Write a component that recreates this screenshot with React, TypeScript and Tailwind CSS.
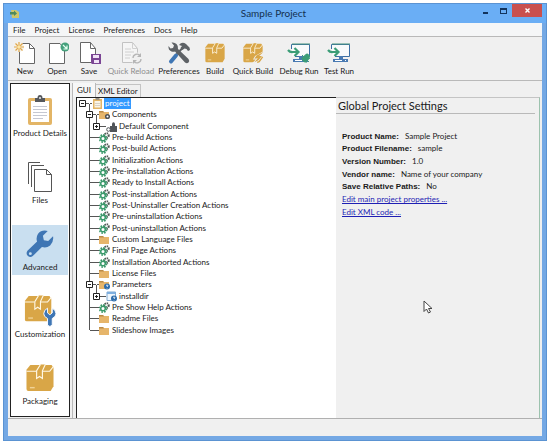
import { ReactNode, useState } from "react";

type TreeIcon =
  | "clipboard"
  | "components"
  | "component"
  | "gears"
  | "folder"
  | "params"
  | "param";

interface TreeNode {
  label: string;
  icon: TreeIcon;
  depth: number;
  toggle?: "plus" | "minus";
}

const treeNodes: TreeNode[] = [
  { label: "project", icon: "clipboard", depth: 0, toggle: "minus" },
  { label: "Components", icon: "components", depth: 1, toggle: "minus" },
  { label: "Default Component", icon: "component", depth: 2, toggle: "plus" },
  { label: "Pre-build Actions", icon: "gears", depth: 1 },
  { label: "Post-build Actions", icon: "gears", depth: 1 },
  { label: "Initialization Actions", icon: "gears", depth: 1 },
  { label: "Pre-installation Actions", icon: "gears", depth: 1 },
  { label: "Ready to Install Actions", icon: "gears", depth: 1 },
  { label: "Post-installation Actions", icon: "gears", depth: 1 },
  { label: "Post-Uninstaller Creation Actions", icon: "gears", depth: 1 },
  { label: "Pre-uninstallation Actions", icon: "gears", depth: 1 },
  { label: "Post-uninstallation Actions", icon: "gears", depth: 1 },
  { label: "Custom Language Files", icon: "folder", depth: 1 },
  { label: "Final Page Actions", icon: "gears", depth: 1 },
  { label: "Installation Aborted Actions", icon: "gears", depth: 1 },
  { label: "License Files", icon: "folder", depth: 1 },
  { label: "Parameters", icon: "params", depth: 1, toggle: "minus" },
  { label: "installdir", icon: "param", depth: 2, toggle: "plus" },
  { label: "Pre Show Help Actions", icon: "gears", depth: 1 },
  { label: "Readme Files", icon: "folder", depth: 1 },
  { label: "Slideshow Images", icon: "folder", depth: 1 },
];

const settings = [
  { name: "Product Name:", value: "Sample Project" },
  { name: "Product Filename:", value: "sample" },
  { name: "Version Number:", value: "1.0" },
  { name: "Vendor name:", value: "Name of your company" },
  { name: "Save Relative Paths:", value: "No" },
];

const menus = ["File", "Project", "License", "Preferences", "Docs", "Help"];

function Box() {
  return (
    <g>
      <path d="M5 1 H27 L29 4 V23 L26 28 H3 Q1 28 1 26 V6 Z" fill="#d9a647" />
      <path d="M1 7.500 H11 M18 7.500 H25 L29 2.500" stroke="#fff8e6" strokeWidth="1.200" fill="none" />
      <path d="M15.500 0.500 L11.500 7 V15 L14.500 13 L17.500 15 V7 L20.500 0.500" stroke="#fff8e6" strokeWidth="1.200" fill="#d9a647" />
      <path d="M4.500 24.500 H9.500" stroke="#f0d296" strokeWidth="1.500" />
    </g>
  );
}

function BoxIcon({ className }: { className: string }) {
  return (
    <svg viewBox="0 0 30 29" className={className} aria-hidden="true">
      <Box />
    </svg>
  );
}

function QuickBoxIcon() {
  return (
    <svg viewBox="0 0 30 29" className="h-5 w-[22px]" aria-hidden="true">
      <Box />
      <path d="M30 12 L18 19 L15 24 L19 24 L14 29 H30 Z" fill="#f0f0f0" />
      <path d="M30 13 L20 18 L17 23 L22 22 L17 28 L23 25 L28 19 L24 19 Z" fill="#d9a647" />
      <path d="M29 20 L24 27 L21 28" stroke="#d9a647" strokeWidth="2" fill="none" />
    </svg>
  );
}

function ToolWrenchBoxIcon() {
  return (
    <svg viewBox="0 0 34 34" className="h-8 w-8" aria-hidden="true">
      <Box />
      <path
        d="M25 14 V19 L27.500 21 L30 19 V14 Q34 16 34 20 Q34 23 30 25 V32 Q27.500 35 25 32 V25 Q21 23 21 20 Q21 16 25 14 Z"
        fill="#3f76b4"
        stroke="#fff"
      />
    </svg>
  );
}

function NewIcon() {
  return (
    <svg viewBox="0 0 24 24" className="size-6" fill="none" aria-hidden="true">
      <path d="M6.500 2.500 H16.500 L21.500 7.500 V22.500 H6.500 Z" fill="#fff" stroke="#666" />
      <path d="M16.500 2.500 V7.500 H21.500" stroke="#666" />
      <circle cx="6" cy="6" r="5" fill="#f5f2ea" />
      <path
        d="M6 1 V11 M1 6 H11 M2.500 2.500 L9.500 9.500 M9.500 2.500 L2.500 9.500"
        stroke="#e0a648"
        strokeWidth="1.200"
      />
      <circle cx="6" cy="6" r="1.800" fill="#fbe6a8" />
    </svg>
  );
}

function OpenIcon() {
  return (
    <svg viewBox="0 0 24 24" className="size-6" fill="none" aria-hidden="true">
      <path d="M4.500 2.500 H15 L19.500 8 V22.500 H4.500 Z" fill="#fff" stroke="#666" />
      <circle cx="20" cy="6" r="4.500" fill="#45a07c" />
      <path d="M18 4 L21.500 7.500 M22 4.500 V8 H18.500" stroke="#e6fff2" strokeWidth="1.200" />
    </svg>
  );
}

function SaveIcon() {
  return (
    <svg viewBox="0 0 24 24" className="size-6" fill="none" aria-hidden="true">
      <path d="M3.500 1.500 H13.500 L18.500 7.500 V21.500 H3.500 Z" fill="#fff" stroke="#666" />
      <path d="M13.500 1.500 V7.500 H18.500" stroke="#666" />
      <path d="M14 13 H24 V23 H15 L14 22 Z" fill="#7b4594" />
      <path d="M16 14 H22 V17 H16 Z M17 19 H22 V22 H17 Z" fill="#f1e3f6" />
    </svg>
  );
}

function ReloadIcon() {
  return (
    <svg viewBox="0 0 24 24" className="size-6" fill="none" aria-hidden="true">
      <path d="M3.500 1.500 H13.500 L18.500 7.500 V21.500 H3.500 Z" fill="#f5f5f5" stroke="#c2c2c2" />
      <path d="M13.500 1.500 V7.500 H18.500 M6 8 H12 M6 11 H15 M6 14 H12 M6 17 H11" stroke="#d0d0d0" />
      <circle cx="18" cy="17.500" r="6" fill="#f0f0f0" />
      <path
        d="M14 17 A4 4 0 0 1 21 14.500 M22 18 A4 4 0 0 1 15 20.500"
        stroke="#b5b5b5"
        strokeWidth="1.300"
      />
      <path d="M22 12 V16 H18 Z M14 23 V19 H18 Z" fill="#b5b5b5" />
    </svg>
  );
}

function PreferencesIcon() {
  return (
    <svg viewBox="0 0 24 24" className="size-6" fill="none" aria-hidden="true">
      <path
        d="M4.500 1.500 L7 4.500 L6 7 L3.500 7.500 L1.500 5 Q1 9 4.500 10.500 Q6.500 11 8 10.500 L18 21.500 Q20 23 21.500 21.500 Q23 20 21.500 18 L11 8 Q11.500 5 9.500 3 Q7.500 1 4.500 1.500 Z"
        fill="#5e6266"
      />
      <path d="M12 4 Q15 0 19 3 L22.500 6.500 L23 9 L21 10 L19.500 8 L17.500 7.500 L15.500 9 L13.500 7 L15 5 Z" fill="#5e6266" />
      <path d="M15.500 7 L9 14" stroke="#5e6266" strokeWidth="2" />
      <path d="M9 14.500 L4 20.500" stroke="#3f76b4" strokeWidth="4" strokeLinecap="round" />
    </svg>
  );
}

function RunIcon({ debug = false }: { debug?: boolean }) {
  return (
    <svg viewBox="0 0 24 24" className="size-6" fill="none" aria-hidden="true">
      <path d="M5 3.500 H22.500 V15.500 H5 Z" fill="#f8fafb" />
      <path d="M4.500 8 V3.500 H22.500 V15.500 H8" stroke="#3c6fa4" />
      <path d="M5 3 H23" stroke="#45927a" />
      <path d="M12 15 H16 V18 H12 Z M6 18 H21 V21 H6 Z" fill="#4a7ab2" />
      <path d="M8 19.500 H15 M18 19.500 H19" stroke="#fff" />
      <path
        d="M1 9 Q3 11.500 6 11 H11 M7.500 7 L11.500 11 L7.500 15"
        stroke="#3b9d77"
        strokeWidth="2.200"
      />
      {debug && (
        <g stroke="#3b9d77">
          <ellipse cx="19" cy="17" rx="2.500" ry="4" fill="#3b9d77" transform="rotate(40 19 17)" />
          <path d="M15 14 L22 21 M14 17.500 L20 15 M17 21 L23 17 M20 12.500 L19 22" />
        </g>
      )}
    </svg>
  );
}

function ClipboardIcon() {
  return (
    <svg viewBox="0 0 26 32" className="h-8 w-[26px]" aria-hidden="true">
      <rect x="1" y="4" width="24" height="27" rx="2" fill="#e3b566" />
      <path d="M4 7 H22 V28 H4 Z" fill="#fff" />
      <path d="M6 12.500 H20 M6 15.500 H20 M6 18.500 H20 M6 21.500 H20 M6 24.500 H16" stroke="#c5c8d2" />
      <path d="M8 8 V4 H10.500 Q10.500 1 13 1 Q15.500 1 15.500 4 H18 V8 Z" fill="#55585c" />
      <circle cx="13" cy="4" r="1" fill="#eee" />
    </svg>
  );
}

function FilesIcon() {
  return (
    <svg viewBox="0 0 26 32" className="h-8 w-[26px]" fill="none" aria-hidden="true">
      <path d="M13 1.500 H1.500 V23" stroke="#555" />
      <path d="M17 4.500 H4.500 V26" stroke="#555" />
      <path d="M7.500 8.500 H19.500 L24.500 13.500 V30.500 H7.500 Z" fill="#fff" stroke="#555" />
      <path d="M19.500 8.500 V13.500 H24.500" stroke="#555" />
    </svg>
  );
}

function WrenchIcon() {
  return (
    <svg viewBox="0 0 29 29" className="h-7 w-[30px]" aria-hidden="true">
      <path
        d="M22.500 1 Q16 -0.500 12.500 4 Q10 8 11.500 12 L1.500 21.500 Q-0.500 24.500 2 27 Q4.500 29 7 27 L16.500 17.500 Q21 19 25 16 Q29 12 28 6.500 L23 11.500 L18.500 10.500 L17.500 6 Z"
        fill="#3f76b4"
      />
      <circle cx="4.500" cy="24.500" r="1.500" fill="#c9dff0" />
    </svg>
  );
}

function NodeIcon({ icon }: { icon: TreeIcon }) {
  const folder = (
    <>
      <path d="M0 2 H4 L5 3 H10 V10 H0 Z" fill="#e6b56a" />
      <path d="M0 2 H4 L5 3.500 H0 Z" fill="#b98a48" />
    </>
  );
  return (
    <svg viewBox="0 0 11 11" className="size-[11px] shrink-0" fill="none" aria-hidden="true">
      {icon === "clipboard" && (
        <>
          <path d="M1 1 H10 V11 H1 Z" fill="#e3b566" />
          <path d="M2.500 3 H8.500 V9.500 H2.500 Z" fill="#fbf5e6" />
          <path d="M3 5.500 H8 M3 7.500 H8" stroke="#c9c2b4" strokeWidth="0.700" />
          <path d="M3.500 0 H7.500 V2 H3.500 Z" fill="#9a9282" />
        </>
      )}
      {icon === "gears" && (
        <>
          <circle cx="7.500" cy="3.500" r="2.200" stroke="#4c5450" strokeWidth="2" strokeDasharray="1.200 0.700" />
          <circle cx="4" cy="6.500" r="3.600" stroke="#3a9a6b" strokeWidth="1.600" strokeDasharray="1.600 1.200" />
          <circle cx="4" cy="6.500" r="2.300" fill="#fff" stroke="#3a9a6b" strokeWidth="1.500" />
        </>
      )}
      {icon === "folder" && folder}
      {icon === "components" && (
        <>
          {folder}
          <circle cx="8.500" cy="7.500" r="1.800" fill="#fff" stroke="#4b5056" strokeWidth="1.500" />
        </>
      )}
      {icon === "component" && (
        <>
          <path d="M4 5 H11 V11 H4 Z" fill="#505459" />
          <path d="M6 5 V2.500 Q7.500 0 9 2.500 V5 Z" fill="#505459" />
          <circle cx="2.500" cy="8.500" r="1.800" fill="#fff" stroke="#505459" />
        </>
      )}
      {icon === "params" && (
        <>
          {folder}
          <circle cx="8" cy="7.500" r="3" fill="#2d6cab" />
          <path d="M7 6.500 Q8 5.500 9 6.500 L8 8 M8 9 V9.500" stroke="#fff" strokeWidth="0.800" />
        </>
      )}
      {icon === "param" && (
        <>
          <path d="M1 1 H9.500 V9.500 H1 Z" fill="#eef6fd" stroke="#7fa8d0" />
          <path d="M1 1 H9.500 V3 H1 Z" fill="#7fb0e0" />
          <circle cx="8" cy="7.500" r="3" fill="#2d6cab" />
          <path d="M7 6.500 Q8 5.500 9 6.500 L8 8 M8 9 V9.500" stroke="#fff" strokeWidth="0.800" />
        </>
      )}
    </svg>
  );
}

function Toggle({ kind }: { kind: "plus" | "minus" }) {
  return (
    <svg viewBox="0 0 7 7" className="z-10 -mx-[3px] size-[7px] shrink-0" fill="none" aria-hidden="true">
      <path d="M0.500 0.500 H6.500 V6.500 H0.500 Z" fill="#fff" stroke="#222" />
      <path d={kind === "plus" ? "M2 3.500 H5 M3.500 2 V5" : "M2 3.500 H5"} stroke="#222" />
    </svg>
  );
}

function TreeRow({
  node,
  last,
  selected,
  onSelect,
}: {
  node: TreeNode;
  last: boolean;
  selected: boolean;
  onSelect: () => void;
}) {
  return (
    <li className="flex min-h-0 flex-1 items-center">
      <span className={node.depth === 0 ? "w-[5px]" : "w-3"} />
      {node.depth === 2 && (
        <span className="h-full w-[7px] border-l border-[#555]" />
      )}
      <span className="flex h-full w-px shrink-0 flex-col">
        <span className={node.depth ? "flex-1 bg-[#555]" : "flex-1"} />
        <span
          className={node.depth === 1 && !last ? "flex-1 bg-[#555]" : "flex-1"}
        />
      </span>
      {node.toggle && (
        <span className="-ml-px flex w-px">
          <Toggle kind={node.toggle} />
        </span>
      )}
      {node.toggle && node.depth < 2 ? (
        <span className="flex h-full w-[9px] items-center">
          <span className="h-px w-1.5 bg-[#555]" />
          <span className="flex h-full w-px flex-col">
            <span className="flex-1" />
            <span className="flex-1 bg-[#555]" />
          </span>
          <span className="h-px flex-1 bg-[#555]" />
        </span>
      ) : (
        <span className="h-px w-[9px] bg-[#555]" />
      )}
      <NodeIcon icon={node.icon} />
      <button
        type="button"
        onClick={onSelect}
        className={
          selected
            ? "ml-px bg-[#3399ff] px-px leading-[11px] text-white"
            : "ml-px px-px leading-[11px]"
        }
      >
        {node.label}
      </button>
    </li>
  );
}

function ToolButton({
  label,
  width,
  disabled = false,
  children,
}: {
  label: string;
  width: string;
  disabled?: boolean;
  children: ReactNode;
}) {
  return (
    <button
      type="button"
      disabled={disabled}
      className={`flex shrink-0 flex-col items-center whitespace-nowrap disabled:text-[#8c8c8c] ${width}`}
    >
      <span className="flex h-6 items-center">{children}</span>
      <span className="leading-3">{label}</span>
    </button>
  );
}

const sections = [
  { label: "Product Details", icon: <ClipboardIcon /> },
  { label: "Files", icon: <FilesIcon /> },
  { label: "Advanced", icon: <WrenchIcon /> },
  { label: "Customization", icon: <ToolWrenchBoxIcon /> },
  { label: "Packaging", icon: <BoxIcon className="h-7 w-[30px]" /> },
];

function App() {
  const [section, setSection] = useState("Advanced");
  const [selected, setSelected] = useState("project");

  return (
    <div className="flex h-screen bg-white p-[3px] font-['Lato',sans-serif] text-[8px] text-[#1a1a1a]">
      <div className="flex min-w-0 flex-1 flex-col border border-[#5b93d2] bg-[#74a8e4] px-1 pb-1">
        <header className="-mx-1 flex h-[19px] shrink-0 items-center bg-[#6aaef5] pl-1.5">
          <svg viewBox="0 0 9 9" className="size-[9px]" aria-hidden="true">
            <path d="M1 1 H6 L9 3 V9 H2 Z" fill="#cfc66a" />
            <path d="M0 3 H4 V1.500 L7 4.500 L4 7 V5.500 H0 Z" fill="#4f8a5c" />
          </svg>
          <h1 className="flex-1 pl-[52px] text-center text-[10px] text-[#14304f]">
            Sample Project
          </h1>
          <div className="flex h-full items-start">
            <button type="button" aria-label="Minimize" className="flex h-[13px] w-[18px] items-center justify-center">
              <span className="mt-1 h-0.5 w-[5px] bg-[#12335c]" />
            </button>
            <button type="button" aria-label="Maximize" className="flex h-[13px] w-[18px] items-center justify-center">
              <span className="h-1.5 w-[7px] border border-t-2 border-[#12335c]" />
            </button>
            <button type="button" aria-label="Close" className="mr-1 flex h-[13px] w-[30px] items-center justify-center bg-[#c9504e]">
              <svg viewBox="0 0 5 5" className="size-[5px]" aria-hidden="true">
                <path d="M0.500 0.500 L4.500 4.500 M4.500 0.500 L0.500 4.500" stroke="#fff" strokeWidth="1.400" />
              </svg>
            </button>
          </div>
        </header>

        <div className="flex min-h-0 flex-1 flex-col bg-[#f0f0f0]">
          <nav className="flex h-3.5 shrink-0 items-center gap-[9px] border-b border-[#b9b9b9] bg-[#f5f6f7] pl-[5px]">
            {menus.map((menu) => (
              <button key={menu} type="button" className="leading-3">
                {menu}
              </button>
            ))}
          </nav>

          <div className="flex h-11 shrink-0 items-start border-b border-[#b9b9b9] pt-1 pl-px">
            <ToolButton label="New" width="w-8"><NewIcon /></ToolButton>
            <ToolButton label="Open" width="w-8"><OpenIcon /></ToolButton>
            <ToolButton label="Save" width="w-8"><SaveIcon /></ToolButton>
            <ToolButton label="Quick Reload" width="w-[52px]" disabled><ReloadIcon /></ToolButton>
            <ToolButton label="Preferences" width="w-11"><PreferencesIcon /></ToolButton>
            <ToolButton label="Build" width="w-7"><BoxIcon className="h-5 w-[22px]" /></ToolButton>
            <ToolButton label="Quick Build" width="w-12"><QuickBoxIcon /></ToolButton>
            <ToolButton label="Debug Run" width="w-11"><RunIcon debug /></ToolButton>
            <ToolButton label="Test Run" width="w-9"><RunIcon /></ToolButton>
          </div>

          <div className="flex min-h-0 flex-1 pt-0.5">
            <aside className="flex shrink-0 pb-px pl-0.5">
              <div className="flex w-[60px] flex-col gap-[17px] border border-[#222] bg-white pt-[7px]">
                {sections.map(({ label, icon }) => (
                  <button
                    key={label}
                    type="button"
                    onClick={() => setSection(label)}
                    className={
                      label === section
                        ? "mx-px flex h-[50px] flex-col items-center bg-[#c9dff0] pt-0.5"
                        : "mx-px flex h-[50px] flex-col items-center pt-0.5"
                    }
                  >
                    <span className="flex h-[34px] items-center">{icon}</span>
                    <span className="leading-3 whitespace-nowrap">{label}</span>
                  </button>
                ))}
              </div>
            </aside>

            <main className="ml-0.5 flex min-w-0 flex-1 flex-col border-l border-[#b9b9b9]">
              <div className="flex h-3.5 shrink-0 items-end" role="tablist">
                <button type="button" role="tab" aria-selected="true" className="h-3.5 border-r border-[#b9b9b9] bg-[#f7f7f7] px-1 leading-3">
                  GUI
                </button>
                <button type="button" role="tab" aria-selected="false" className="h-[13px] border-t border-r border-[#c4c4c4] px-0.5 leading-3">
                  XML Editor
                </button>
              </div>

              <div className="flex min-h-0 flex-1 pl-[3px]">
                <div className="w-[260px] shrink-0 border-t border-l border-[#222] bg-white">
                  <ul className="flex h-[238px] flex-col whitespace-nowrap">
                    {treeNodes.map((node, i) => (
                      <TreeRow
                        key={node.label}
                        node={node}
                        last={i === treeNodes.length - 1}
                        selected={node.label === selected}
                        onSelect={() => setSelected(node.label)}
                      />
                    ))}
                  </ul>
                </div>

                <section className="relative mr-0.5 min-w-0 flex-1 border-t border-r border-t-[#c4c4c4] border-r-[#9cc2ae]">
                  <h2 className="mr-1 border-b border-[#b9b9b9] pl-0.5 text-[11px] leading-[15px]">
                    Global Project Settings
                  </h2>
                  <div className="mt-4 grid h-[88px] auto-rows-fr items-center pl-1.5">
                    {settings.map(({ name, value }) => (
                      <p key={name}>
                        <b className="mr-1.5 font-['Liberation_Sans',sans-serif]">{name}</b>
                        {value}
                      </p>
                    ))}
                    <p>
                      <a href="#properties" className="text-[#1f1fb4] underline">
                        Edit main project properties ...
                      </a>
                    </p>
                    <p>
                      <a href="#xml" className="text-[#1f1fb4] underline">
                        Edit XML code ...
                      </a>
                    </p>
                  </div>
                  {/* mouse pointer */}
                  <svg viewBox="0 0 10 14" className="absolute top-[202px] left-[87px] h-3.5 w-2.5" aria-hidden="true">
                    <path d="M1 1 V11.500 L3.500 9 L5.500 13 L7.500 12 L5.500 8.500 H9 Z" fill="#fff" stroke="#444" />
                  </svg>
                </section>
              </div>
            </main>
          </div>

          <footer className="h-[18px] shrink-0 border-t border-[#b0b0b0]" />
        </div>
      </div>
    </div>
  );
}

export default App;
